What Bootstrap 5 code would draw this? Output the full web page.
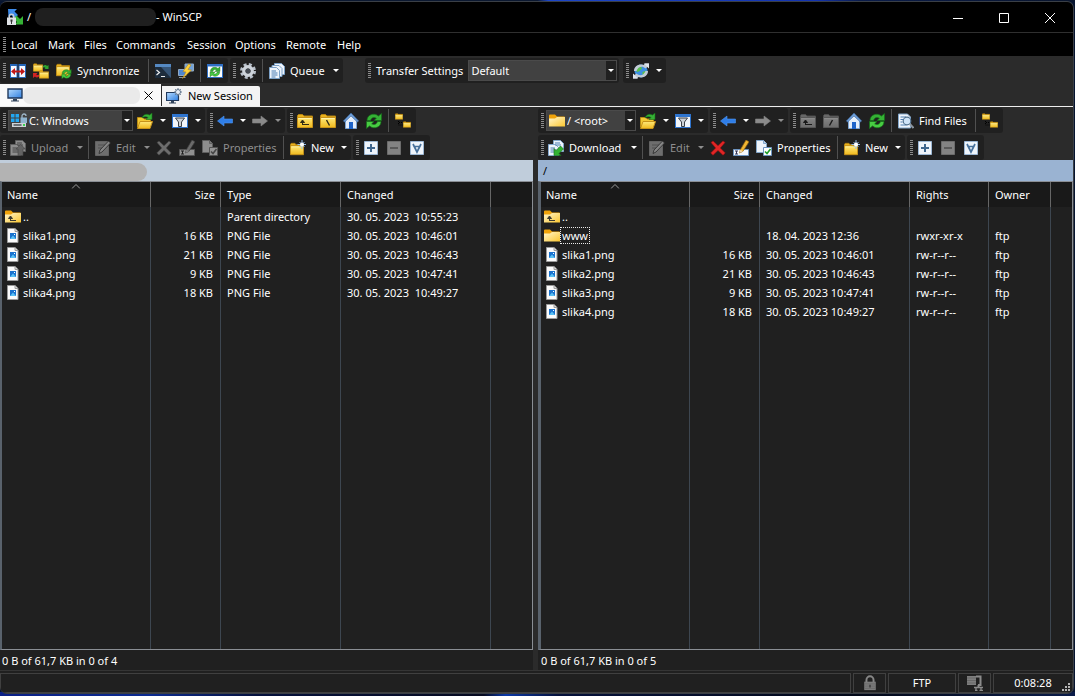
<!DOCTYPE html>
<html lang="en" data-bs-theme="dark">
<head>
<meta charset="utf-8">
<meta name="viewport" content="width=device-width, initial-scale=1">
<title>WinSCP</title>
<link href="https://cdn.jsdelivr.net/npm/bootstrap@5.3.0/dist/css/bootstrap.min.css" rel="stylesheet">
<style>
:root{--face:#202020;--frame:#2b2b2b;--edge:#8a8e94;--colline:#3d4650}
body{font-family:"Noto Sans","Open Sans",sans-serif;font-size:11px;line-height:16px;color:#fff;padding:1px 1px 2px 0;
  background:#061430 linear-gradient(90deg,#0a1f86,#0b2a90 14%,#04103c 24%,#060a20 45%,#0a38a8 47%,#04103a 52%,#020818 80%,#0a1c4a) bottom/100% 4px no-repeat}
.desk-strip{position:absolute;inset:0 0 auto 0;height:1px;background:linear-gradient(90deg,#0b1830 50%,#1c46c8 51%,#1233b0 76%,#0a1c4a 80%,#08142c)}
.win{background:var(--frame);border:1px solid #3a3f46;border-left:0;border-radius:7px;overflow:hidden}
button{font:inherit;color:inherit;background:none;border:0;padding:0}
button:hover:enabled{background-color:#3a3a3a}
.ic{width:16px;height:16px;flex:none;display:block}
.titlebar{background:#000;height:31px;border-bottom:1px solid #2f2f2f;padding-left:7px}
.title-mask{width:121px;height:18px;border-radius:8px;background:#1f1f1f}
.wc{width:46px;height:30px}
.wc svg{width:10px;height:10px;fill:none;stroke:#fff}
.menubar{background:#000;height:23px}
.menubar button{padding:0 0 0 4px;margin-right:1px;height:20px;text-align:left}
.m-s{width:36px}.m-l{width:70px}.m-m{width:50px}.m-ses{width:47px}.m-k{width:35px}.m-f{width:31px}
.grip{width:3px;height:15px;flex:none;margin:0 1px 0 3px;background:repeating-linear-gradient(#8c8c8c 0 1px,transparent 1px 2px)}
.top-bar{height:27px;gap:2px}
.tb-far{margin:0 2px 0 20px}
.bar-1,.bar-2{gap:2px}
.bar-1{padding-top:1px}
.bar-2{padding-top:2px}
.tbar{background:var(--face);border-radius:3px;height:25px;padding-right:1px}
.tb{display:flex;align-items:center;gap:5px;width:23px;height:23px;padding-left:3px;flex:none;border-radius:2px;white-space:nowrap;text-align:left}
.tb:disabled,.off{color:#8e8e8e}
.tb:disabled .ic{filter:grayscale(1) brightness(.58)}
.tb:disabled .ic.dark{filter:grayscale(1) brightness(1.400)}
.w-sync{width:93px}.w-queue{width:64px}.w-up{width:67px}.w-edit{width:49px}.w-prop{width:82px}.w-new{width:51px}.w-down{width:83px}.w-find{width:78px}
.car{width:12px;height:23px;flex:none;display:flex;align-items:center;justify-content:center}
.tri::before{content:"";border:3px solid transparent;border-top-color:currentColor;border-bottom:0}
.vsep{width:1px;height:23px;margin:0 3px 0 2px;background:#505050;flex:none}
.combo{height:21px;background:#414141;border:1px solid #4a4a4a;margin:0 1px}
.combo .ic{margin-left:2px}
.combo select{appearance:none;border:0;background:none;color:#fff;font:inherit;height:19px;padding:0 0 0 2px;min-width:0;flex:1;outline:0}
.combo select option{background:#414141}
.combo .tri{width:10px;height:19px;background:var(--face);flex:none;display:flex;align-items:center;justify-content:center;pointer-events:none}
.combo-drive{width:125px}.combo-root{width:90px}.combo-set{width:149px}
.tabstrip{height:24px;border-bottom:1px solid #ededed}
.tab-on{background:#fafafa;width:161px;height:22px;color:#000;padding-left:7px}
.tab-new{background:#f3f3f3;width:98px;height:20px;margin-left:1px;color:#000;padding-left:4px;border-radius:0 2px 0 0;gap:6px}
button.tab-new:hover{background:#fff}
.tab-mask{width:117px;height:17px;border-radius:7px;background:#eaeaea}
.panes{gap:5px}
.pane{min-width:0}
.pane-l{flex:533 1 0}
.pane-r{flex:535 1 0}
.pathbar{height:21px;background:#c0cddb;color:#000;flex:none}
.pathbar.now{background:#9ab3d2;padding-left:5px}
.path-mask{width:147px;height:18px;border-radius:0 9px 9px 0;background:#b3b3b3}
.listbox{border:1px solid var(--edge);border-left:2px solid #59626c;background:var(--face);min-height:0}
.pane-r .listbox{border-left-width:3px}
.pane-r .selinfo{padding-left:3px}
.files{width:100%;height:100%;table-layout:fixed;border-collapse:separate;border-spacing:0}
.files th{height:25px;background:#191919;font-weight:400;padding:1px 5px 0;border-right:1px solid #666;position:relative}
.files td{height:19px;padding:1px 7px 0 6px;border-right:1px solid var(--colline);white-space:pre;overflow:hidden}
.files td:first-child{padding:0 0 0 3px}
.files th:not(:first-child):not(.text-end){padding-left:6px}
.files th:last-child,.files td:last-child{border-right:0}
.files tr.rest td{height:auto}
.sortmark{position:absolute;left:50%;top:2px;width:9px;height:5px;fill:none;stroke:#9a9a9a}
.fname{display:flex;align-items:center;height:18px}
.fname span{padding:1px 1px 0;border:1px dotted transparent;height:17px;line-height:14px}
.fname .cur{border-color:#e8e8e8}
.c149{width:149px}.c70{width:70px}.c120{width:120px}.c150{width:150px}.c79{width:79px}.c62{width:62px}
.selinfo{height:20px;background:var(--face);padding:3px 0 0 2px;flex:none}
.statusbar{height:23px;background:var(--face);border-top:1px solid #353535;padding-top:2px;gap:2px;flex:none}
.cell{border:1px solid #404040;height:20px;display:flex;align-items:center;justify-content:center}
.cell-i{width:33px}.cell-p{width:68px}.cell-t{width:80px;position:relative}
.sizer{position:absolute;right:2px;bottom:1px;width:8px;height:8px;fill:#b5b5b5}
</style>
</head>
<body class="vh-100 d-flex flex-column overflow-hidden m-0">
<svg width="0" height="0" class="position-absolute" aria-hidden="true">
<defs>
<linearGradient id="gy" x2="0" y2="1"><stop stop-color="#ffe97a"/><stop offset="1" stop-color="#f0b91c"/></linearGradient>
<linearGradient id="gb" x2="1" y2="1"><stop stop-color="#b5dbff"/><stop offset="1" stop-color="#2f7fe0"/></linearGradient>
<linearGradient id="gw" x2="1" y2="1"><stop stop-color="#fff6cf"/><stop offset="1" stop-color="#fbc62f"/></linearGradient>
<symbol id="fold" viewBox="0 0 16 16" preserveAspectRatio="none"><path d="M.5 4.500V2.500l1-1h4l1.500 1.500h8.500v1.500z" fill="#e9b11c" stroke="#b58310"/><path d="M.5 4.500h15v10H.5z" fill="url(#gy)" stroke="#c8931a"/><path d="M1.500 5.500h13" stroke="#fff3a8"/></symbol>
<symbol id="garr" viewBox="0 0 16 16"><path d="M1 7.500C1 3 5 .3 10 1.500L12.500 3 15.500.5V7.500H8l2.300-2.300C8 3.800 5.500 4.500 4.500 7.500z" fill="#35b135" stroke="#15701a" stroke-width=".7"/><path d="M15 8.500c0 4.500-4 7.200-9 6L3.500 13 .5 15.500V8.500H8l-2.300 2.300c2.300 1.400 4.800.7 5.800-2.300z" fill="#48cc42" stroke="#15701a" stroke-width=".7"/></symbol>
<symbol id="logo" viewBox="0 0 16 16"><path d="M1 0h9L7.500 2.500 11 6 7.500 9.500 4 6 1.500 8.500z" fill="#3d8bea"/><path d="M16 15.500H7.500L10 13 6.500 9.500l3-3L13 10l3-3z" fill="#35b335"/><path d="M2.300 9V7.500a2.200 2.200 0 0 1 4.400 0V9" fill="none" stroke="#c9ced3" stroke-width="1.500"/><path d="M0 8.500h9V16H0z" fill="#dfe2e5"/><path d="M3.500 10.500h2v1.800l-.5.7V15H4v-2l-.5-.7z" fill="#333"/></symbol>
<symbol id="cmp" viewBox="0 0 16 16"><path d="M0 1h7.500v14H0zM8.500 1H16v14H8.500z" fill="#2465b8"/><path d="M1 3h5.500v11H1zM9.500 3H15v11H9.500z" fill="#f4f8ff"/><path d="M1 8.500 5 5v2.500h6V5l4 3.500-4 3.500V9.500H5V12z" fill="#c01818"/></symbol>
<symbol id="syn2" viewBox="0 0 16 16"><use href="#fold" width="10" height="9"/><use href="#fold" x="6" y="7" width="10" height="9"/><path d="M10 3c2-1.500 3-1.500 4 0l1.500-1v4h-4l1-1c-1-1.500-2-.5-2.500-.5z" fill="#2fa52f"/><path d="M6 13.500c-2 1.500-3 1-4 0L0 15v-5h4.500L3.300 11.500c1 1 1.700.5 2.700 0z" fill="#d02323"/></symbol>
<symbol id="sync" viewBox="0 0 16 16"><use href="#fold" width="14" height="14"/><use href="#garr" x="5" y="6" width="11" height="10"/></symbol>
<symbol id="term" viewBox="0 0 16 16"><path d="M0 1h16v14H0z" fill="#1d2c3c"/><path d="M0 1h16v3H0z" fill="#5589c2"/><path d="M16 4v11L6 4z" fill="#365577"/><path d="m1.500 7 3 2.500-3 2.500M6 13.500h4" fill="none" stroke="#eee" stroke-width="1.200"/></symbol>
<symbol id="putty" viewBox="0 0 16 16"><path d="M7 1h8.500v7H7z" fill="#6fa2dd" stroke="#8fa9c4"/><path d="M.5 6.500H8v6H.5z" fill="#4f87d0" stroke="#8fa9c4"/><path d="M1 14.500h6.500" stroke="#8b97a4"/><path d="M10.500 1 5 8.500l3 .5-3.500 6.500L13.500 7l-3.500-.5L13 2z" fill="#ffd23c" stroke="#b98514" stroke-width=".6"/></symbol>
<symbol id="repg" viewBox="0 0 16 16"><path d="M0 1h16v14H0z" fill="#2f6fc4"/><path d="M1 3.500h14V14H1z" fill="#fff"/><use href="#garr" x="2" y="3.500" width="12" height="10.500"/></symbol>
<symbol id="gear" viewBox="0 0 16 16"><circle cx="8" cy="8" r="6.500" fill="none" stroke="#b7bfc9" stroke-width="3" stroke-dasharray="2.900 2.205"/><circle cx="8" cy="8" r="4.200" fill="none" stroke="#cdd3da" stroke-width="3.400"/><circle cx="8" cy="8" r="2.500" fill="#444a52"/></symbol>
<symbol id="docs3" viewBox="0 0 16 16"><g fill="#eef4fb" stroke="#7ba0c6"><path d="M5.500.5h7l3 3v8h-10z"/><path d="M3 2.500h7l3 3v8H3z"/><path d="M.5 4.500h7l3 3v8H.5z"/></g><path d="M2.500 8H7M2.500 10h6M2.500 12h6M2.500 14h4" stroke="#4c7eb3"/></symbol>
<symbol id="globe" viewBox="0 0 16 16"><circle cx="8" cy="8" r="6.500" fill="#3d8fe3"/><path d="M4 5 8 3.500l1 2-3 3-2.500.5zM9.500 9l4-1.500-1 4-3 1.500z" fill="#58c04d"/><path d="M1 8C1 3 6 .5 10.500 2L12 .5h4V5l-1.500-1-2 1.500C9.500 2.500 5 3.500 3.500 8zM15 8c0 5-5 7.500-9.500 6L4 15.500H0V11l1.500 1 2-1.500c3 3 7.500 2 9-2.500z" fill="#c3ccd6"/><path d="M11 .5h5v5zM5 15.500H0v-5z" fill="#dfe4ea"/></symbol>
<symbol id="mon" viewBox="0 0 16 16"><path d="M1 2h14v9H1z" fill="url(#gb)" stroke="#20395c" stroke-width="1.400"/><path d="M6 12h4v1.500h2v1H4v-1h2z" fill="#33455c"/></symbol>
<symbol id="monn" viewBox="0 0 16 16"><path d="M.5 4.500h12v8H.5z" fill="url(#gb)" stroke="#20395c" stroke-width="1.200"/><path d="M5 13h3v1.500h2v1H3v-1h2z" fill="#33455c"/><circle cx="12" cy="4" r="2.500" fill="#e6edf5" stroke="#64788f"/><path d="M12 0v1.500M12 6.500V8M8 4h1.500M14.500 4H16M9.200 1.200l1 1M13.800 5.800l1 1M14.800 1.200l-1 1M9.200 6.800l1-1" stroke="#64788f"/></symbol>
<symbol id="drive" viewBox="0 0 16 16"><path d="M0 1h3.500v3.500H0zM4.500 1H8v3.500H4.500zM0 5.500h3.500V9H0zM4.500 5.500H8V9H4.500z" fill="#22a7f2"/><path d="M1 10h14v4H1z" fill="#cfd4d8"/><path d="M2.500 11.200h8v1.500h-8z" fill="#4c5358"/><path d="M12 11h2v2h-2z" fill="#39d353"/><path d="M11 5V3a2 2 0 0 1 4 0" fill="none" stroke="#9fb6c8" stroke-width="1.300"/><path d="M9.500 4.500H16V10H9.500z" fill="#8fb4cf"/></symbol>
<symbol id="open" viewBox="0 0 16 16"><path d="M.5 14V4.500h5L7 6h6.500v2" fill="#f3c935" stroke="#b98b14"/><path d="M.5 15.500 3 8.500h12.500l-2.500 7z" fill="url(#gy)" stroke="#c8931a"/><path d="M5 5C6 1.500 9.500.3 12.500 2L15 0v6.500H9L11 4.500C9 3.200 7 3.500 5 5z" fill="#36b136" stroke="#176f1a" stroke-width=".6"/></symbol>
<symbol id="filt" viewBox="0 0 16 16"><path d="M0 1h16v14H0z" fill="#2f75cf"/><path d="M1 4h14v10H1z" fill="#f2f6fb"/><path d="M3.500 5h9L9.500 9v4.500h-3V9z" fill="#ccd1d6" stroke="#3a3f45"/></symbol>
<symbol id="back" viewBox="0 0 16 16"><path d="M.5 8 7 3v3h8.500v4H7v3z" fill="#2f7ee8" stroke="#4e94ee" stroke-width=".6"/></symbol>
<symbol id="fwd" viewBox="0 0 16 16"><path d="M15.500 8 9 3v3H.5v4H9v3z" fill="#efefef" stroke="#ddd" stroke-width=".6"/></symbol>
<symbol id="fup" viewBox="0 0 16 16"><use href="#fold" width="16" height="16"/><path d="M5.500 12V8M3.500 9.500l2-2.500 2 2.500zM5.500 11.500H12" fill="#2f2a15" stroke="#2f2a15"/></symbol>
<symbol id="froot" viewBox="0 0 16 16"><use href="#fold" width="16" height="16"/><path d="m6.500 7 3 5.500" stroke="#2f2a15" stroke-width="1.400"/></symbol>
<symbol id="frootr" viewBox="0 0 16 16"><use href="#fold" width="16" height="16"/><path d="m9.500 7-3 5.500" stroke="#2f2a15" stroke-width="1.400"/></symbol>
<symbol id="home" viewBox="0 0 16 16"><path d="M2.500 7.500 8 2l5.500 5.500v8h-11z" fill="#e4eefa" stroke="#7ba3d3"/><path d="M8 0 .3 8l1.400 1L8 3l6.300 6 1.400-1z" fill="#6f9fd8" stroke="#3a679f" stroke-width=".6"/><path d="M6 9h4v7H6z" fill="#1d63c9"/></symbol>
<symbol id="tree" viewBox="0 0 16 16"><use href="#fold" x="0" y="0" width="8" height="7"/><use href="#fold" x="8" y="8" width="8" height="7"/><path d="M3.500 8v4H8M4 9.500h4" fill="none" stroke="#000" stroke-dasharray="1 1"/></symbol>
<symbol id="docs" viewBox="0 0 16 16"><path d="M5.500.5h7l3 3v8h-10z" fill="#eef4fb" stroke="#84a8cc"/><path d="M.5 4.500h7l3 3v8H.5z" fill="#eef4fb" stroke="#84a8cc"/><path d="M7 3h5M7 5h6M2.500 8H7M2.500 10h6M2.500 12h6" stroke="#4c7eb3"/></symbol>
<symbol id="up" viewBox="0 0 16 16"><use href="#docs" width="16" height="16"/><path d="M8 15.500V9H6l4.500-4.500L15.500 9H13v6.500z" fill="#aaa" stroke="#777" stroke-width=".6"/></symbol>
<symbol id="down" viewBox="0 0 16 16"><use href="#docs" width="16" height="16"/><path d="M6 15.500V8.500l2 2L12.500 6l3 3L11 13.500l2 2z" fill="#32b332" stroke="#146b18" stroke-width=".6"/></symbol>
<symbol id="edit" viewBox="0 0 16 16"><path d="M.5 1.500h13v14H.5z" fill="#bdbdbd" stroke="#aaa"/><path d="M3 5h7M3 8h4" stroke="#8a8a8a"/><path d="m4 13.500 1-3.500 8.500-9 2 2L7 12z" fill="#e6e6e6" stroke="#444" stroke-width=".8"/></symbol>
<symbol id="del" viewBox="0 0 16 16"><path d="M1 2.500 3 1l5 4.700L13 1l2 1.500L10.300 8l5 5-2.300 2.200-5-4.800-5 4.800L.7 13l5-5z" fill="#e02626" stroke="#9d0f0f" stroke-width=".6"/></symbol>
<symbol id="ren" viewBox="0 0 16 16"><path d="M.5 9.500h15v6H.5z" fill="#f5f8fc" stroke="#6d94c0"/><path d="M2 11h3M3.500 11v3M2 14h3" stroke="#335"/><path d="m6.500 13 .8-3.200L13 0l3 1.800-6 9.500z" fill="#f2b632" stroke="#8f6412" stroke-width=".7"/><path d="m6.500 13 .8-3.200 2.700 1.500z" fill="#f3d9b0"/></symbol>
<symbol id="prop" viewBox="0 0 16 16"><path d="M.5.500h7l3 3v9H.5z" fill="#eef4fb" stroke="#84a8cc"/><path d="M7.500.500v3h3" fill="#bcd3ec" stroke="#84a8cc"/><path d="M7.500 7.500h8v8h-8z" fill="#fff" stroke="#6d94c0"/><path d="m9 11.500 2 2 3.500-4.500" fill="none" stroke="#1f9d28" stroke-width="1.600"/></symbol>
<symbol id="newf" viewBox="0 0 16 16"><use href="#fold" y="2" width="14" height="14"/><path d="M12 0v9M7.500 4.500h9M9.500 2l5 5M14.500 2l-5 5" stroke="#8db8ea"/><circle cx="12" cy="4.500" r="2" fill="#fff"/></symbol>
<symbol id="plus" viewBox="0 0 16 16"><path d="M1.500 1.500h13v13h-13z" fill="#eef4fb" stroke="#9cb7d4"/><path d="M8 4v8M4 8h8" stroke="#3f678f" stroke-width="2"/></symbol>
<symbol id="minus" viewBox="0 0 16 16"><path d="M1.500 1.500h13v13h-13z" fill="#e2e2e2" stroke="#bbb"/><path d="M4 8h8" stroke="#999" stroke-width="2"/></symbol>
<symbol id="inv" viewBox="0 0 16 16"><path d="M1.500 1.500h13v13h-13z" fill="#eef4fb" stroke="#9cb7d4"/><path d="m4 4 4 8 4-8M5 6.500h6" fill="none" stroke="#46709b" stroke-width="1.700"/></symbol>
<symbol id="find" viewBox="0 0 16 16"><path d="M.5 1h9l3 3v11H.5z" fill="#eef4fb" stroke="#84a8cc"/><path d="M2.500 4H8M2.500 6.500h3M2.500 9h2M2.500 12h6" stroke="#4c7eb3"/><circle cx="9" cy="8" r="3.800" fill="#cfe4f8" stroke="#51718f" stroke-width="1.200"/><path d="m11.800 11 3.700 4" stroke="#8a949e" stroke-width="2"/></symbol>
<symbol id="wfold" viewBox="0 0 16 16"><path d="M0 5V2.500q0-1 1-1h5L8 3.500h7q1 0 1 1V7H0z" fill="#f0a30a"/><path d="M0 5.500h6L8 4h8v9.500H0z" fill="url(#gw)"/></symbol>
<symbol id="wup" viewBox="0 0 16 16"><use href="#wfold" width="16" height="16"/><path d="M5.500 12V9M3.500 9.500l2-2.500 2 2.500zM5.500 11.500H11" fill="#3b3a30" stroke="#3b3a30"/></symbol>
<symbol id="png" viewBox="0 0 16 16"><path d="M2.500.5h7.500l3 3v11H2.500z" fill="#fbfbfb" stroke="#9b9b9b"/><path d="M10 .5v3h3" fill="#ddd" stroke="#9b9b9b"/><path d="M5 5h6v6H5z" fill="#1a73cf"/><path d="m5 11 3-3.500 3 3.500z" fill="#59c1f5"/><path d="M9 6h1v1H9z" fill="#fff"/></symbol>
<symbol id="lock" viewBox="0 0 16 18"><path d="M4 8V5.500a4 4 0 0 1 8 0V8" fill="none" stroke="#868686" stroke-width="2.200"/><path d="M1.500 7.500h13V17h-13z" fill="#7c7c7c"/><path d="M2 10h12M2 12.500h12M2 15h12" stroke="#696969"/><path d="M8 11v3" stroke="#333" stroke-width="1.400"/></symbol>
<symbol id="zip" viewBox="0 0 16 16"><path d="M0 1h9v9H0z" fill="#7e7e7e"/><path d="M0 3h9M0 5.500h9M0 8h9" stroke="#686868"/><path d="M9 1.500h4.500V10H11M11.500 10v3" fill="none" stroke="#8b8b8b" stroke-width="2"/><path d="M7 12.500h9M8 15.500h2.500M12.500 15.500H16M9 12v4M14 12v4" stroke="#8b8b8b" stroke-width="1.300"/></symbol>
</defs>
</svg>
<div class="desk-strip"></div>

<div class="win d-flex flex-column flex-grow-1">
  <header class="titlebar d-flex align-items-center flex-shrink-0">
    <svg class="ic me-1"><use href="#logo"/></svg>
    <span class="me-1">/</span>
    <span class="title-mask"></span><span>- WinSCP</span>
    <div class="d-flex ms-auto">
      <button class="wc" aria-label="Minimize"><svg><path d="M0 5.500h10"/></svg></button>
      <button class="wc" aria-label="Maximize"><svg><path d="M.5.500h9v9h-9z"/></svg></button>
      <button class="wc" aria-label="Close"><svg><path d="m0 0 10 10M10 0 0 10"/></svg></button>
    </div>
  </header>

  <nav class="menubar d-flex align-items-center flex-shrink-0" aria-label="Main menu">
    <span class="grip"></span>
    <button class="m-s">Local</button><button class="m-k">Mark</button><button class="m-f">Files</button><button class="m-l">Commands</button><button class="m-ses">Session</button><button class="m-m">Options</button><button class="m-m">Remote</button><button class="m-k">Help</button>
  </nav>

  <div class="top-bar d-flex align-items-end flex-shrink-0">
    <div class="tbar d-flex align-items-center">
      <span class="grip"></span>
      <button class="tb" aria-label="Compare directories"><svg class="ic"><use href="#cmp"/></svg></button>
      <button class="tb" aria-label="Synchronize folders"><svg class="ic"><use href="#syn2"/></svg></button>
      <button class="tb w-sync"><svg class="ic"><use href="#sync"/></svg>Synchronize</button>
      <span class="vsep"></span>
      <button class="tb" aria-label="Open terminal"><svg class="ic"><use href="#term"/></svg></button>
      <button class="tb" aria-label="Open in PuTTY"><svg class="ic"><use href="#putty"/></svg></button>
      <span class="vsep"></span>
      <button class="tb" aria-label="Synchronize browsing"><svg class="ic"><use href="#repg"/></svg></button>
    </div>
    <div class="tbar d-flex align-items-center">
      <span class="grip"></span>
      <button class="tb" aria-label="Preferences"><svg class="ic"><use href="#gear"/></svg></button>
      <span class="vsep"></span>
      <button class="tb w-queue"><svg class="ic"><use href="#docs3"/></svg>Queue</button><button class="car tri" aria-label="Queue options"></button>
    </div>
    <div class="tbar tb-far d-flex align-items-center">
      <span class="grip"></span>
      <label for="preset" class="px-1">Transfer Settings</label>
      <div class="combo combo-set d-flex"><select id="preset"><option>Default</option></select><span class="tri"></span></div>
    </div>
    <div class="tbar d-flex align-items-center">
      <span class="grip"></span>
      <button class="tb" aria-label="Keep remote directory up to date"><svg class="ic"><use href="#globe"/></svg></button><button class="car tri" aria-label="More"></button>
    </div>
  </div>

  <div class="tabstrip d-flex align-items-end flex-shrink-0">
    <div class="tab-on d-flex align-items-center"><svg class="ic"><use href="#mon"/></svg><span class="tab-mask"></span>
      <button class="ms-1" aria-label="Close tab"><svg width="9" height="9" fill="none" stroke="#000" class="d-block"><path d="m.5.500 8 8M8.500.500l-8 8"/></svg></button></div>
    <button class="tab-new d-flex align-items-center"><svg class="ic"><use href="#monn"/></svg>New Session</button>
  </div>

  <main class="panes d-flex flex-grow-1">
    <section class="pane pane-l d-flex flex-column" aria-label="Local files">
      <div class="d-flex bar-1">
        <div class="tbar d-flex align-items-center">
          <span class="grip"></span>
          <div class="combo combo-drive d-flex align-items-center"><svg class="ic"><use href="#drive"/></svg><select aria-label="Drive"><option>C: Windows</option></select><span class="tri"></span></div>
          <button class="tb" aria-label="Open directory"><svg class="ic"><use href="#open"/></svg></button><button class="car tri" aria-label="Bookmarks"></button>
          <button class="tb" aria-label="Filter"><svg class="ic"><use href="#filt"/></svg></button><button class="car tri" aria-label="Filter options"></button>
        </div>
        <div class="tbar d-flex align-items-center">
          <span class="grip"></span>
          <button class="tb" aria-label="Back"><svg class="ic"><use href="#back"/></svg></button><button class="car tri" aria-label="History"></button>
          <button class="tb" disabled aria-label="Forward"><svg class="ic"><use href="#fwd"/></svg></button><button class="car tri off" disabled aria-label="Forward history"></button>
        </div>
        <div class="tbar d-flex align-items-center">
          <span class="grip"></span>
          <button class="tb" aria-label="Parent directory"><svg class="ic"><use href="#fup"/></svg></button>
          <button class="tb" aria-label="Root directory"><svg class="ic"><use href="#froot"/></svg></button>
          <button class="tb" aria-label="Home directory"><svg class="ic"><use href="#home"/></svg></button>
          <button class="tb" aria-label="Refresh"><svg class="ic"><use href="#garr"/></svg></button>
          <span class="vsep"></span>
          <button class="tb" aria-label="Tree"><svg class="ic"><use href="#tree"/></svg></button>
        </div>
      </div>
      <div class="d-flex bar-2">
        <div class="tbar d-flex align-items-center">
          <span class="grip"></span>
          <button class="tb w-up" disabled><svg class="ic"><use href="#up"/></svg>Upload</button><button class="car tri off" disabled aria-label="Upload options"></button>
          <span class="vsep"></span>
          <button class="tb w-edit" disabled><svg class="ic"><use href="#edit"/></svg>Edit</button><button class="car tri off" disabled aria-label="Edit options"></button>
          <button class="tb" disabled aria-label="Delete"><svg class="ic dark"><use href="#del"/></svg></button>
          <button class="tb" disabled aria-label="Rename"><svg class="ic"><use href="#ren"/></svg></button>
          <button class="tb w-prop" disabled><svg class="ic"><use href="#prop"/></svg>Properties</button>
          <span class="vsep"></span>
          <button class="tb w-new"><svg class="ic"><use href="#newf"/></svg>New</button><button class="car tri" aria-label="New options"></button>
        </div>
        <div class="tbar d-flex align-items-center">
          <span class="grip"></span>
          <button class="tb" aria-label="Select files"><svg class="ic"><use href="#plus"/></svg></button>
          <button class="tb" disabled aria-label="Unselect files"><svg class="ic"><use href="#minus"/></svg></button>
          <button class="tb" aria-label="Invert selection"><svg class="ic"><use href="#inv"/></svg></button>
        </div>
      </div>
      <div class="pathbar d-flex align-items-end"><span class="path-mask"></span></div>
      <div class="listbox flex-grow-1">
        <table class="files">
          <colgroup><col class="c149"><col class="c70"><col class="c120"><col class="c150"><col></colgroup>
          <thead><tr><th>Name<svg class="sortmark translate-middle-x"><path d="m.5 4.500 4-4 4 4"/></svg></th><th class="text-end">Size</th><th>Type</th><th>Changed</th><th></th></tr></thead>
          <tbody>
            <tr><td><div class="fname"><svg class="ic"><use href="#wup"/></svg><span>..</span></div></td><td></td><td>Parent directory</td><td>30. 05. 2023  10:55:23</td><td></td></tr>
            <tr><td><div class="fname"><svg class="ic"><use href="#png"/></svg><span>slika1.png</span></div></td><td class="text-end">16 KB</td><td>PNG File</td><td>30. 05. 2023  10:46:01</td><td></td></tr>
            <tr><td><div class="fname"><svg class="ic"><use href="#png"/></svg><span>slika2.png</span></div></td><td class="text-end">21 KB</td><td>PNG File</td><td>30. 05. 2023  10:46:43</td><td></td></tr>
            <tr><td><div class="fname"><svg class="ic"><use href="#png"/></svg><span>slika3.png</span></div></td><td class="text-end">9 KB</td><td>PNG File</td><td>30. 05. 2023  10:47:41</td><td></td></tr>
            <tr><td><div class="fname"><svg class="ic"><use href="#png"/></svg><span>slika4.png</span></div></td><td class="text-end">18 KB</td><td>PNG File</td><td>30. 05. 2023  10:49:27</td><td></td></tr>
            <tr class="rest"><td></td><td></td><td></td><td></td><td></td></tr>
          </tbody>
        </table>
      </div>
      <div class="selinfo">0 B of 61,7 KB in 0 of 4</div>
    </section>

    <section class="pane pane-r d-flex flex-column" aria-label="Remote files">
      <div class="d-flex bar-1">
        <div class="tbar d-flex align-items-center">
          <span class="grip"></span>
          <div class="combo combo-root d-flex align-items-center"><svg class="ic"><use href="#wfold"/></svg><select aria-label="Remote directory"><option>/ &lt;root&gt;</option></select><span class="tri"></span></div>
          <button class="tb" aria-label="Open directory"><svg class="ic"><use href="#open"/></svg></button><button class="car tri" aria-label="Bookmarks"></button>
          <button class="tb" aria-label="Filter"><svg class="ic"><use href="#filt"/></svg></button><button class="car tri" aria-label="Filter options"></button>
        </div>
        <div class="tbar d-flex align-items-center">
          <span class="grip"></span>
          <button class="tb" aria-label="Back"><svg class="ic"><use href="#back"/></svg></button><button class="car tri" aria-label="History"></button>
          <button class="tb" disabled aria-label="Forward"><svg class="ic"><use href="#fwd"/></svg></button><button class="car tri off" disabled aria-label="Forward history"></button>
        </div>
        <div class="tbar d-flex align-items-center">
          <span class="grip"></span>
          <button class="tb" disabled aria-label="Parent directory"><svg class="ic"><use href="#fup"/></svg></button>
          <button class="tb" disabled aria-label="Root directory"><svg class="ic"><use href="#frootr"/></svg></button>
          <button class="tb" aria-label="Home directory"><svg class="ic"><use href="#home"/></svg></button>
          <button class="tb" aria-label="Refresh"><svg class="ic"><use href="#garr"/></svg></button>
          <span class="vsep"></span>
          <button class="tb w-find"><svg class="ic"><use href="#find"/></svg>Find Files</button>
          <span class="vsep"></span>
          <button class="tb" aria-label="Tree"><svg class="ic"><use href="#tree"/></svg></button>
        </div>
      </div>
      <div class="d-flex bar-2">
        <div class="tbar d-flex align-items-center">
          <span class="grip"></span>
          <button class="tb w-down"><svg class="ic"><use href="#down"/></svg>Download</button><button class="car tri" aria-label="Download options"></button>
          <span class="vsep"></span>
          <button class="tb w-edit" disabled><svg class="ic"><use href="#edit"/></svg>Edit</button><button class="car tri off" disabled aria-label="Edit options"></button>
          <button class="tb" aria-label="Delete"><svg class="ic"><use href="#del"/></svg></button>
          <button class="tb" aria-label="Rename"><svg class="ic"><use href="#ren"/></svg></button>
          <button class="tb w-prop"><svg class="ic"><use href="#prop"/></svg>Properties</button>
          <span class="vsep"></span>
          <button class="tb w-new"><svg class="ic"><use href="#newf"/></svg>New</button><button class="car tri" aria-label="New options"></button>
        </div>
        <div class="tbar d-flex align-items-center">
          <span class="grip"></span>
          <button class="tb" aria-label="Select files"><svg class="ic"><use href="#plus"/></svg></button>
          <button class="tb" disabled aria-label="Unselect files"><svg class="ic"><use href="#minus"/></svg></button>
          <button class="tb" aria-label="Invert selection"><svg class="ic"><use href="#inv"/></svg></button>
        </div>
      </div>
      <div class="pathbar now d-flex align-items-center">/</div>
      <div class="listbox flex-grow-1">
        <table class="files">
          <colgroup><col class="c149"><col class="c70"><col class="c150"><col class="c79"><col class="c62"><col></colgroup>
          <thead><tr><th>Name<svg class="sortmark translate-middle-x"><path d="m.5 4.500 4-4 4 4"/></svg></th><th class="text-end">Size</th><th>Changed</th><th>Rights</th><th>Owner</th><th></th></tr></thead>
          <tbody>
            <tr><td><div class="fname"><svg class="ic"><use href="#wup"/></svg><span>..</span></div></td><td></td><td></td><td></td><td></td><td></td></tr>
            <tr><td><div class="fname"><svg class="ic"><use href="#wfold"/></svg><span class="cur">www</span></div></td><td></td><td>18. 04. 2023 12:36</td><td>rwxr-xr-x</td><td>ftp</td><td></td></tr>
            <tr><td><div class="fname"><svg class="ic"><use href="#png"/></svg><span>slika1.png</span></div></td><td class="text-end">16 KB</td><td>30. 05. 2023 10:46:01</td><td>rw-r--r--</td><td>ftp</td><td></td></tr>
            <tr><td><div class="fname"><svg class="ic"><use href="#png"/></svg><span>slika2.png</span></div></td><td class="text-end">21 KB</td><td>30. 05. 2023 10:46:43</td><td>rw-r--r--</td><td>ftp</td><td></td></tr>
            <tr><td><div class="fname"><svg class="ic"><use href="#png"/></svg><span>slika3.png</span></div></td><td class="text-end">9 KB</td><td>30. 05. 2023 10:47:41</td><td>rw-r--r--</td><td>ftp</td><td></td></tr>
            <tr><td><div class="fname"><svg class="ic"><use href="#png"/></svg><span>slika4.png</span></div></td><td class="text-end">18 KB</td><td>30. 05. 2023 10:49:27</td><td>rw-r--r--</td><td>ftp</td><td></td></tr>
            <tr class="rest"><td></td><td></td><td></td><td></td><td></td><td></td></tr>
          </tbody>
        </table>
      </div>
      <div class="selinfo">0 B of 61,7 KB in 0 of 5</div>
    </section>
  </main>

  <footer class="statusbar d-flex">
    <div class="cell flex-grow-1"></div>
    <div class="cell cell-i"><svg class="ic"><use href="#lock"/></svg></div>
    <div class="cell cell-p">FTP</div>
    <div class="cell cell-i"><svg class="ic"><use href="#zip"/></svg></div>
    <div class="cell cell-t">0:08:28<svg class="sizer"><path d="M6 0h2v2H6zM3 3h2v2H3zM6 3h2v2H6zM0 6h2v2H0zM3 6h2v2H3zM6 6h2v2H6z"/></svg></div>
  </footer>
</div>
<script src="https://cdn.jsdelivr.net/npm/bootstrap@5.3.0/dist/js/bootstrap.bundle.min.js"></script>
</body>
</html>
